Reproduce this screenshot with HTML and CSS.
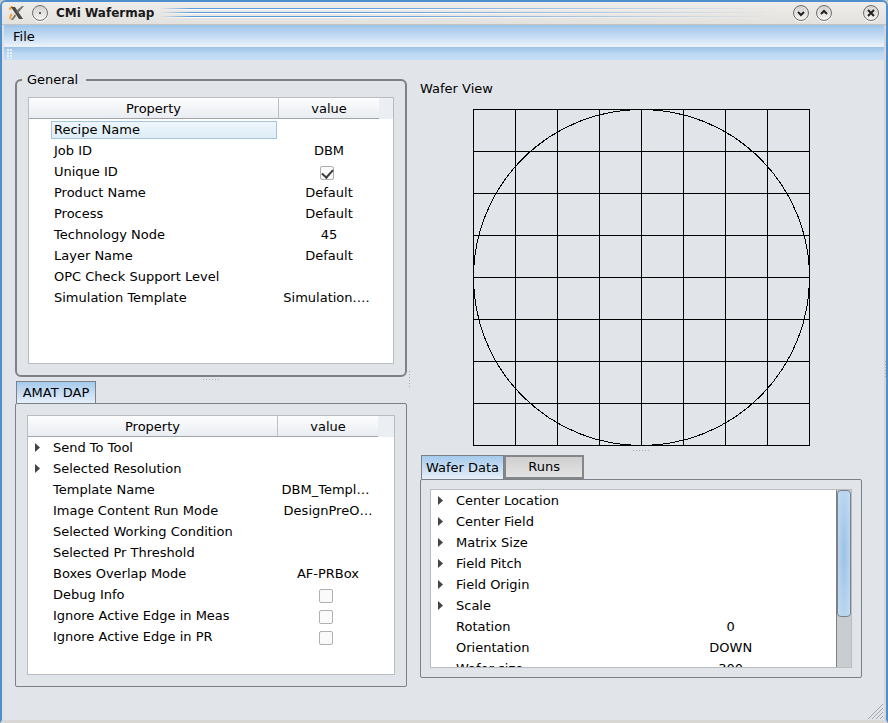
FILE: index.html
```html
<!DOCTYPE html>
<html lang="en">
<head>
<meta charset="utf-8">
<title>CMi Wafermap</title>
<link rel="stylesheet" href="styles.css">
</head>
<body>
<div class="window">
  <header class="titlebar">
    <svg class="app-icon" width="16" height="16" viewBox="0 0 16 16" aria-hidden="true">
      <path d="M1 5q0-3 3-3M3 9q-3 3-1 5" stroke="#f0a23c" stroke-width="2" fill="none"/>
      <path d="M2 2h4l8 12h-4z" fill="#4a4a4a"/>
      <path d="M13 1h2L9 8 7 6zM2 15l4-6 1 2-3 4z" fill="#77756f"/>
    </svg>
    <button class="round" aria-label="Window menu"><svg width="16" height="16" viewBox="0 0 16 16"><circle cx="8" cy="8" r="1" fill="#333"/></svg></button>
    <h1 class="title">CMi Wafermap</h1>
    <div class="stripes"></div>
    <div class="controls">
      <button class="round" aria-label="Minimize"><svg width="16" height="16" viewBox="0 0 16 16"><path d="m5 7 3 3 3-3"/></svg></button>
      <button class="round" aria-label="Maximize"><svg width="16" height="16" viewBox="0 0 16 16"><path d="m5 9 3-3 3 3"/></svg></button>
      <button class="round close" aria-label="Close"><svg width="16" height="16" viewBox="0 0 16 16"><path d="m5 5 6 6M11 5l-6 6"/></svg></button>
    </div>
  </header>
  <nav class="menubar"><button class="menu">File</button></nav>
  <div class="toolbar"><span class="grip"></span></div>

  <main class="workspace">
    <div class="column">
      <fieldset class="group">
        <legend>General</legend>
        <div class="tree">
          <table>
            <colgroup><col class="c-name"><col class="c-value"><col class="c-rest"></colgroup>
            <thead><tr><th>Property</th><th>value</th><td></td></tr></thead>
            <tbody>
              <tr><td class="selected"><span>Recipe Name</span></td><td></td></tr>
              <tr><td>Job ID</td><td>DBM</td></tr>
              <tr><td><label for="unique">Unique ID</label></td><td class="check"><input type="checkbox" id="unique" checked></td></tr>
              <tr><td>Product Name</td><td>Default</td></tr>
              <tr><td>Process</td><td>Default</td></tr>
              <tr><td>Technology Node</td><td>45</td></tr>
              <tr><td>Layer Name</td><td>Default</td></tr>
              <tr><td>OPC Check Support Level</td><td></td></tr>
              <tr><td>Simulation Template</td><td class="cut">Simulation.…</td></tr>
            </tbody>
          </table>
        </div>
      </fieldset>
      <div class="splitter"><span class="dots"></span></div>
      <section class="tabbed dap">
        <div class="tabs" role="tablist"><button class="tab active" role="tab" aria-selected="true">AMAT DAP</button></div>
        <div class="pane">
          <div class="tree">
            <table>
              <colgroup><col class="c-name"><col class="c-value"><col class="c-rest"></colgroup>
              <thead><tr><th>Property</th><th>value</th><td></td></tr></thead>
              <tbody>
                <tr><td><button class="expand" aria-label="Expand Send To Tool"></button>Send To Tool</td><td></td></tr>
                <tr><td><button class="expand" aria-label="Expand Selected Resolution"></button>Selected Resolution</td><td></td></tr>
                <tr><td>Template Name</td><td class="cut">DBM_Templ…</td></tr>
                <tr><td>Image Content Run Mode</td><td>DesignPreO…</td></tr>
                <tr><td>Selected Working Condition</td><td></td></tr>
                <tr><td>Selected Pr Threshold</td><td></td></tr>
                <tr><td>Boxes Overlap Mode</td><td>AF-PRBox</td></tr>
                <tr><td><label for="debug">Debug Info</label></td><td class="check"><input type="checkbox" id="debug"></td></tr>
                <tr><td><label for="meas">Ignore Active Edge in Meas</label></td><td class="check"><input type="checkbox" id="meas"></td></tr>
                <tr><td><label for="pr">Ignore Active Edge in PR</label></td><td class="check"><input type="checkbox" id="pr"></td></tr>
              </tbody>
            </table>
          </div>
        </div>
      </section>
    </div>

    <div class="splitter vertical"><span class="dots"></span></div>

    <div class="column right">
      <h2 class="view-title">Wafer View</h2>
      <svg class="wafer" width="337" height="337" viewBox="0 0 337 337" role="img" aria-label="Wafer map" shape-rendering="crispEdges" fill="none" stroke="#000">
        <path d="M.5 0v337M42.5 0v337M84.5 0v337M126.5 0v337M168.5 0v337M210.5 0v337M252.5 0v337M294.5 0v337M336.5 0v337M0 .5h337M0 42.5h337M0 84.5h337M0 126.5h337M0 168.5h337M0 210.5h337M0 252.5h337M0 294.5h337M0 336.5h337"/>
        <circle cx="168.5" cy="168.5" r="168"/>
      </svg>
      <div class="splitter wide"><span class="dots"></span></div>
      <section class="tabbed data">
        <div class="tabs" role="tablist"><button class="tab active" role="tab" aria-selected="true">Wafer Data</button><button class="tab" role="tab" aria-selected="false">Runs</button></div>
        <div class="pane">
          <div class="tree scrolled">
            <div class="rows">
              <table>
                <colgroup><col><col class="c-data"></colgroup>
                <tbody>
                  <tr><td><button class="expand" aria-label="Expand Center Location"></button>Center Location</td><td></td></tr>
                  <tr><td><button class="expand" aria-label="Expand Center Field"></button>Center Field</td><td></td></tr>
                  <tr><td><button class="expand" aria-label="Expand Matrix Size"></button>Matrix Size</td><td></td></tr>
                  <tr><td><button class="expand" aria-label="Expand Field Pitch"></button>Field Pitch</td><td></td></tr>
                  <tr><td><button class="expand" aria-label="Expand Field Origin"></button>Field Origin</td><td></td></tr>
                  <tr><td><button class="expand" aria-label="Expand Scale"></button>Scale</td><td></td></tr>
                  <tr><td>Rotation</td><td>0</td></tr>
                  <tr><td>Orientation</td><td>DOWN</td></tr>
                  <tr><td>Wafer size</td><td>300</td></tr>
                </tbody>
              </table>
            </div>
            <div class="scrollbar"><div class="thumb"></div></div>
          </div>
        </div>
      </section>
    </div>
  </main>
  <span class="dots edge"></span>
  <svg class="size-grip" width="17" height="17" viewBox="0 0 17 17" aria-hidden="true"><path d="M1 16 16 1M5 16 16 5M9 16l7-7M13 16l3-3" stroke="#a3a6a9" fill="none"/></svg>
</div>
</body>
</html>
```
FILE: styles.css
```css
* { box-sizing: border-box; }

body {
  margin: 0;
  background: #c9c9c9;
  color: #000;
  font: 13px/16px "DejaVu Sans", sans-serif;
}

button { font: inherit; color: inherit; border: 0; padding: 0; background: none; }

.window {
  position: relative;
  display: flex;
  flex-direction: column;
  height: 100vh;
  min-height: 640px;
  background: #e1e5e9;
  border: 2px solid #4f8fce;
  border-bottom: 3px solid #d9d7d4;
  border-radius: 6px 6px 0 0;
  box-shadow: inset 2px 0 #dfe1e3, inset -2px 0 #d9d7d4;
  overflow: hidden;
}

/* Title bar */
.titlebar {
  flex: none;
  display: flex;
  align-items: center;
  height: 23px;
  padding: 0 7px;
  background: linear-gradient(#efedea, #e4e2df);
  border-bottom: 1px solid #c4c2bf;
}
.app-icon { margin-right: 7px; }
.title { margin: 0 6px 0 8px; font-size: 12px; line-height: 16px; color: #1a1a1a; }
.stripes {
  flex: 1;
  height: 10px;
  margin-right: 20px;
  background: repeating-linear-gradient(#5b9ad8 0 1px, #fff 1px 2px, #e9e8e6 2px 4px);
  mask-image: linear-gradient(90deg, transparent, #000 5%, #000 30%, transparent);
}
.controls { display: flex; gap: 7px; }
.round {
  width: 16px;
  height: 16px;
  border: 1px solid #6f6d6b;
  border-radius: 50%;
  background: linear-gradient(#d4d2d0, #f5f4f3);
  box-shadow: 0 1px #fff;
}
.round svg { display: block; margin: -1px; fill: none; stroke: #222; stroke-width: 2; }
.round circle { stroke: none; }
.round.close { margin-left: 24px; }

.menubar {
  flex: none;
  height: 22px;
  margin: 0 2px;
  padding: 1px 9px 0;
  background: linear-gradient(#9fc5e9, #c3dbf3 50%, #edf4fb);
}
.menu { height: 22px; }
.toolbar {
  flex: none;
  display: flex;
  align-items: center;
  height: 13px;
  margin: 0 2px;
  padding-left: 3px;
  background: linear-gradient(#9ac1e6, #bcd7f2 50%, #c6def5);
}
.grip {
  width: 5px;
  height: 10px;
  background: radial-gradient(circle at 1px 1px, #e9f3fc 1px, transparent 1px) 0 0 / 3px 3px;
}

/* Workspace */
.workspace {
  flex: 1;
  min-height: 0;
  display: grid;
  grid-template-columns: minmax(0, 392fr) 13px minmax(0, 442fr);
  padding: 11px 24px 33px 13px;
}
.column { display: flex; flex-direction: column; min-height: 0; }
.right { padding: 10px 0 9px; }

.splitter { flex: none; display: flex; align-items: center; justify-content: center; height: 4px; }
.splitter.wide { height: 9px; }
.splitter.vertical { width: 5px; height: auto; }
.dots {
  width: 17px;
  height: 1px;
  background: repeating-linear-gradient(90deg, #a9adb2 0 1px, transparent 1px 3px);
}
.vertical .dots, .edge {
  width: 1px;
  height: 17px;
  background: repeating-linear-gradient(#a9adb2 0 1px, transparent 1px 3px);
}
.edge { position: absolute; right: 0; top: 50%; }
.size-grip { position: absolute; right: 2px; bottom: 0; }

.group {
  flex: 1 1 306px;
  display: flex;
  flex-direction: column;
  min-width: 0;
  min-height: 0;
  margin: 0;
  padding: 9px 11px 11px;
  border: 2px solid #7d8187;
  border-radius: 6px;
}
.group legend { margin-left: -6px; padding: 1px 8px 0 5px; }
.group .tree { height: 100%; }

/* Tabs */
.tabbed { display: flex; flex-direction: column; min-height: 0; }
.dap { flex: 1 1 306px; }
.data { flex: 1; }
.tabs { flex: none; display: flex; height: 22px; padding-left: 1px; }
.data .tabs { height: 24px; }
.tab {
  min-width: 80px;
  padding: 0 4px;
  border: 2px solid #84868a;
  background: linear-gradient(#cfcfcf, #e3e3e3);
}
.tab.active {
  border: 1px solid #7d8187;
  border-bottom: 0;
  background: linear-gradient(#a5caec, #e6eff8);
}
.pane {
  flex: 1;
  display: flex;
  min-height: 0;
  padding: 11px;
  border: 1px solid #7d8187;
  border-radius: 2px;
}
.data .pane { padding: 9px; }

/* Property trees */
.tree { flex: 1; min-width: 0; overflow: hidden; background: #fff; border: 1px solid #b9bdc1; }
table { width: 100%; table-layout: fixed; border-collapse: separate; border-spacing: 0; }
.c-value { width: 100px; }
.c-rest { width: 14px; }
.dap .c-rest { width: 16px; }
.c-data { width: 52%; }
th, td { height: 21px; padding: 0; }
th {
  padding-top: 2px;
  font-weight: normal;
  background: linear-gradient(#fdfdfe, #e9edf1);
  border-bottom: 1px solid #a2a5a8;
}
th:first-child { border-right: 1px solid #bcc0c4; }
thead td { background: #ebeff4; }
tbody td { text-align: center; white-space: nowrap; }
tbody td:first-child { position: relative; padding-left: 25px; text-align: left; }
tbody td.selected { padding-left: 22px; padding-right: 2px; }
.selected span {
  display: block;
  height: 18px;
  padding-left: 2px;
  border: 1px solid #a3c6de;
  background: linear-gradient(#edf6fb, #deedf6);
}
tbody td.cut { padding-right: 5px; }
.check { padding-right: 5px; }
.check input {
  appearance: none;
  display: block;
  width: 14px;
  height: 14px;
  margin: 3px auto 0;
  border: 1px solid #b0b0b0;
  border-radius: 2px;
  background: #fafafa;
}
.check input:checked::before {
  content: "";
  display: block;
  width: 9px;
  height: 5px;
  margin: 2px 1px;
  border: solid #3c3c3c;
  border-width: 0 0 2px 2px;
  transform: rotate(-48deg);
}
.expand {
  position: absolute;
  left: 7px;
  top: 6px;
  width: 5px;
  height: 9px;
  background: #444;
  clip-path: polygon(0 0, 100% 50%, 0 100%);
}

.view-title { margin: 0 0 12px; font-size: 13px; line-height: 16px; font-weight: normal; }
.wafer { flex: none; align-self: center; max-width: 100%; }

.scrolled { display: flex; }
.rows { flex: 1; min-width: 0; overflow: hidden; }
.scrollbar { flex: none; width: 15px; border-left: 1px solid #7d8187; background: #c9cdd0; }
.thumb {
  height: 72%;
  border: 1px solid #7d8187;
  border-radius: 4px;
  background: radial-gradient(ellipse, #9cc2e6, #c5def4);
}
```
